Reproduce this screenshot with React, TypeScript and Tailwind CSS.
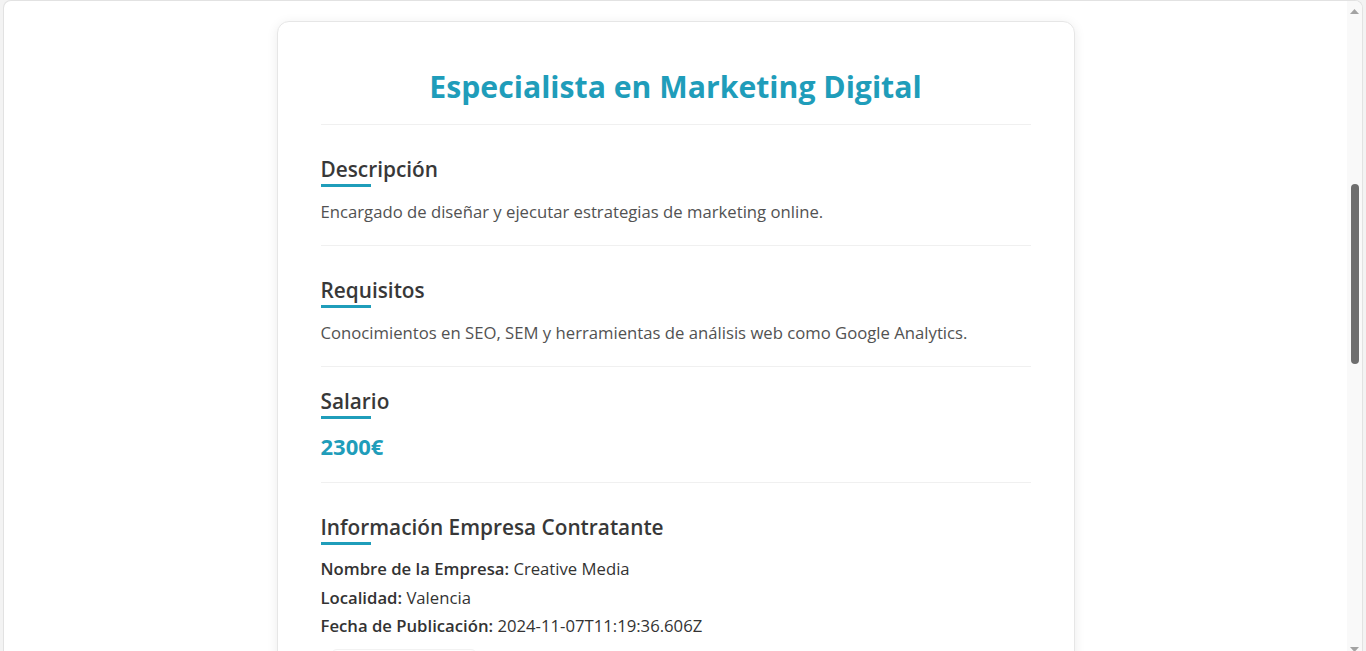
// Detalle de una oferta de empleo, con barra de scroll dibujada a mano
const font = { fontFamily: '"Open Sans", "Noto Sans", sans-serif' };

interface SeccionProps {
  titulo: string;
  className: string;
  children: React.ReactNode;
}

const Seccion = ({ titulo, className, children }: SeccionProps) => {
  return (
    <div className={`border-b border-[#f0f0f0] ${className}`}>
      <h2 className="text-[20.8px] leading-[30px] font-semibold text-[#383838]">{titulo}</h2>
      <div className="w-[50px] h-[3px] bg-[#1f9dba]" />
      {children}
    </div>
  );
};

const Scrollbar = () => {
  return (
    <div className="w-[15px] shrink-0 bg-[#f9f9f9] flex flex-col items-center">
      <svg width="9" height="5" viewBox="0 0 9 5" className="mt-[8px]">
        <path d="M4.5 0 L9 5 L0 5 Z" fill="#a3a3a3" />
      </svg>
      <div className="mt-[170px] w-[8px] h-[180px] rounded-full bg-[#6e6e6e]" />
      <div className="flex-1" />
      <svg width="9" height="5" viewBox="0 0 9 5" className="mb-[8px]">
        <path d="M0 0 L9 0 L4.5 5 Z" fill="#a3a3a3" />
      </svg>
    </div>
  );
};

export default function App() {
  return (
    <div className="h-[651px] bg-[#f3f3f3] overflow-hidden" style={font}>
      <div className="ml-[3px] w-[1360px] h-[660px] bg-white border-l border-t border-r border-[#e2e2e2] rounded-t-lg overflow-hidden flex">
        <div className="flex-1 overflow-hidden">
          <div className="mx-auto mt-[20px] w-[798px] bg-white border border-[#e6e6e6] rounded-xl shadow-[0_2px_12px_rgba(0,0,0,0.08)] px-[43px] pb-10">
            <div className="pt-[45px] pb-[17px] border-b border-[#f0f0f0]">
              <h1 className="text-center text-[30.2px] leading-[40px] font-bold text-[#1f9dba]">
                Especialista en Marketing Digital
              </h1>
            </div>

            <Seccion titulo="Descripción" className="pt-[29px] pb-[21px]">
              <p className="mt-[13px] text-[16.7px] leading-[24px] text-[#525252]">
                Encargado de diseñar y ejecutar estrategias de marketing online.
              </p>
            </Seccion>

            <Seccion titulo="Requisitos" className="pt-[29px] pb-[21px]">
              <p className="mt-[13px] text-[16.7px] leading-[24px] text-[#525252]">
                Conocimientos en SEO, SEM y herramientas de análisis web como Google Analytics.
              </p>
            </Seccion>

            <Seccion titulo="Salario" className="pt-[19px] pb-[22px]">
              <p className="mt-[13px] text-[22px] leading-[28px] font-bold text-[#1f9dba]">2300€</p>
            </Seccion>

            <Seccion titulo="Información Empresa Contratante" className="pt-[29px] pb-[22px]">
              <div className="mt-[10px] text-[16.7px] leading-[28.5px] text-[#333333]">
                <p>
                  <span className="font-semibold">Nombre de la Empresa:</span> Creative Media
                </p>
                <p>
                  <span className="font-semibold">Localidad:</span> Valencia
                </p>
                <p>
                  <span className="font-semibold">Fecha de Publicación:</span> 2024-11-07T11:19:36.606Z
                </p>
              </div>
              <button className="mt-[8px] ml-[10px] w-[146px] h-[40px] rounded-md border border-[#f2f2f2] bg-white" />
            </Seccion>
          </div>
        </div>
        <Scrollbar />
      </div>
    </div>
  );
}
